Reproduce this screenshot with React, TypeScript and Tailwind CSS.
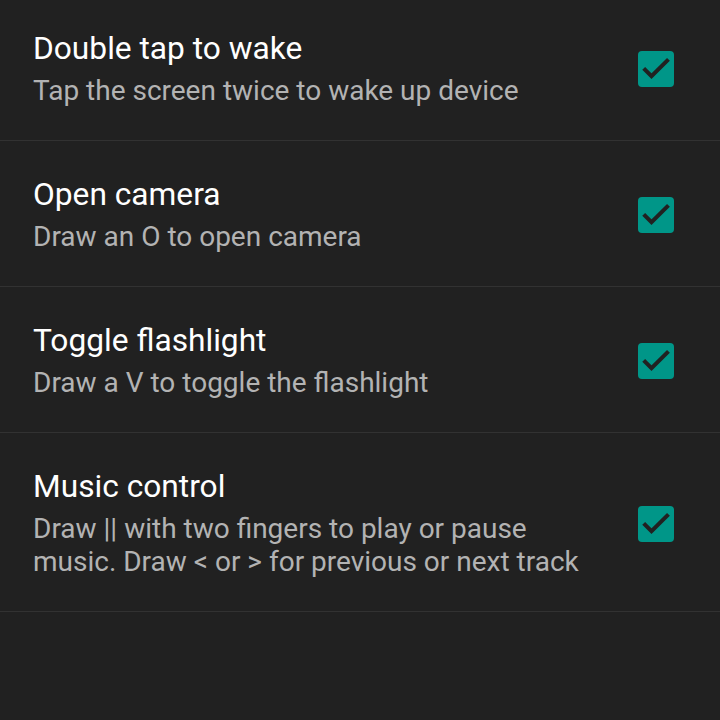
import React, { useState } from "react";

interface Setting {
  id: string;
  title: string;
  summary: string;
}

const settings: Setting[] = [
  { id: "wake", title: "Double tap to wake", summary: "Tap the screen twice to wake up device" },
  { id: "camera", title: "Open camera", summary: "Draw an O to open camera" },
  { id: "flash", title: "Toggle flashlight", summary: "Draw a V to toggle the flashlight" },
  {
    id: "music",
    title: "Music control",
    summary: "Draw || with two fingers to play or pause music. Draw < or > for previous or next track",
  },
];

const CheckBox: React.FC<{ checked: boolean; onToggle: () => void }> = ({ checked, onToggle }) => (
  <button
    onClick={onToggle}
    className={`w-[36px] h-[36px] rounded-[4px] shrink-0 ${
      checked ? "bg-[#009688]" : "border-[4px] border-[#8a8a8a]"
    }`}
  >
    {checked && (
      <svg width="36" height="36" viewBox="0 0 24 24">
        <path d="M3.8 11.6L9 16.8L20.3 5.6" fill="none" stroke="#212121" strokeWidth="2.7" />
      </svg>
    )}
  </button>
);

export default function App() {
  const [checked, setChecked] = useState<Record<string, boolean>>({
    wake: true,
    camera: true,
    flash: true,
    music: true,
  });

  return (
    <div
      className="w-[720px] h-[720px] bg-[#212121] overflow-hidden"
      style={{ fontFamily: "Roboto, 'Noto Sans', sans-serif" }}
    >
      {/* list is scrolled a few px up */}
      <div className="-mt-[5px]">
        {settings.map((s) => (
          <div
            key={s.id}
            className="flex items-center pl-[33px] pr-[46px] pt-[36px] pb-[33px] border-b border-[#323232]"
          >
            <div className="flex-1 pr-[38px]">
              <div className="text-[31.7px] leading-[36px] text-white">{s.title}</div>
              <div className="mt-[7px] text-[28px] leading-[33px] text-[#b3b3b3]">{s.summary}</div>
            </div>
            <CheckBox
              checked={checked[s.id]}
              onToggle={() => setChecked({ ...checked, [s.id]: !checked[s.id] })}
            />
          </div>
        ))}
      </div>
    </div>
  );
}
